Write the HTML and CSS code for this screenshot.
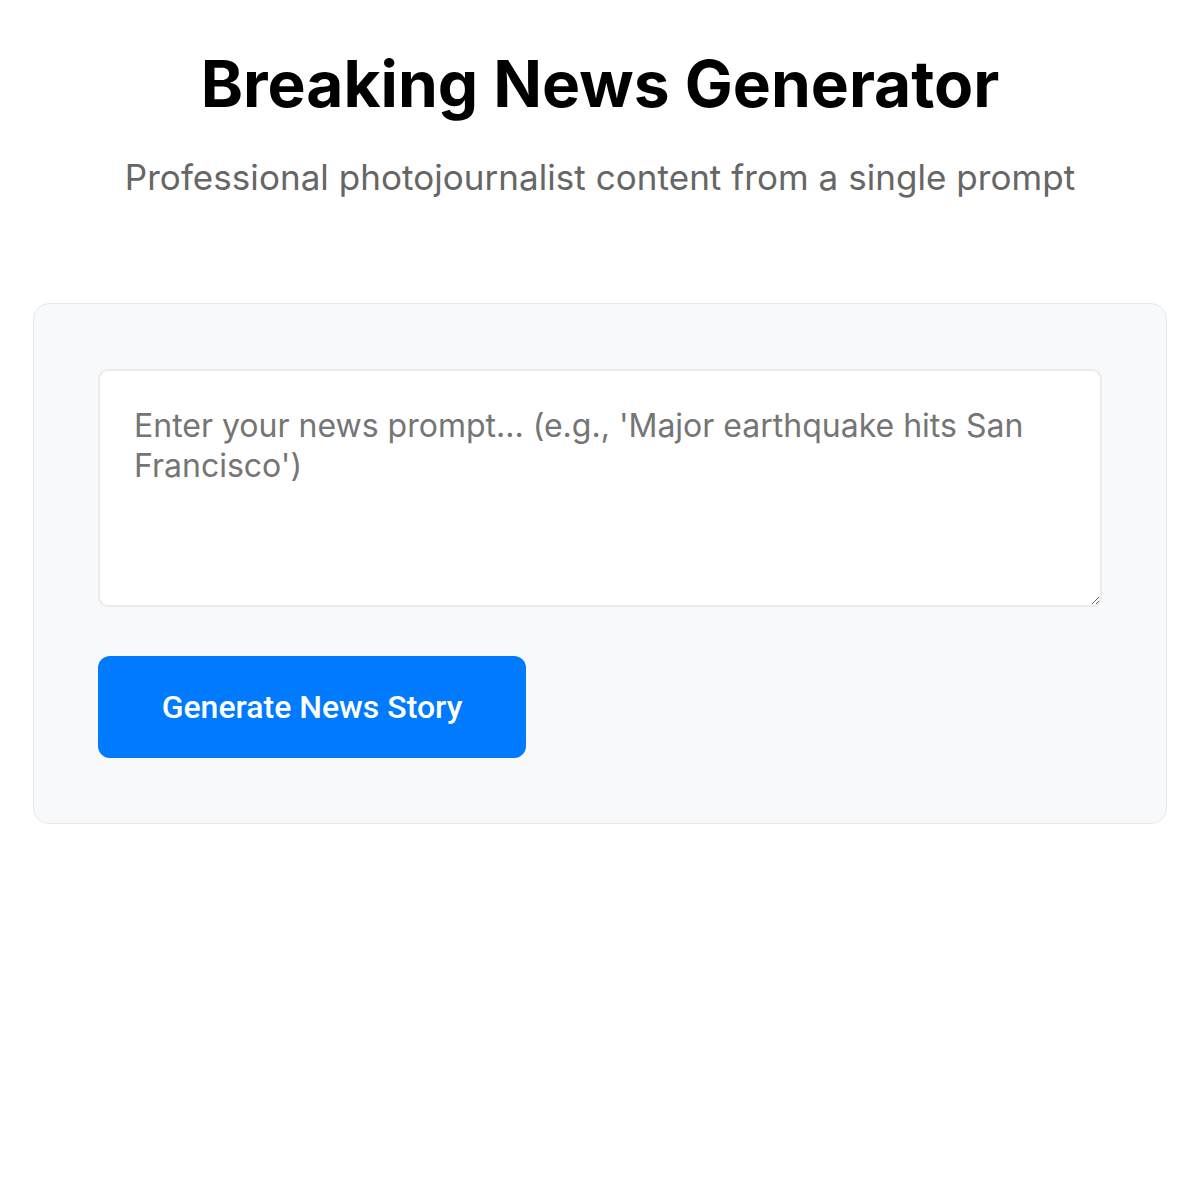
FILE: index.html
```html
<!DOCTYPE html>
<html lang="en">
<head>
    <meta charset="UTF-8">
    <meta name="viewport" content="width=device-width, initial-scale=1.0">
    <title>Breaking News Generator</title>
    <link rel="stylesheet" href="styles.css">
</head>
<body>
    <div class="container">
        <header class="header">
            <h1>Breaking News Generator</h1>
            <p class="subtitle">Professional photojournalist content from a single prompt</p>
        </header>

        <div class="prompt-card">
            <textarea
                id="prompt"
                class="prompt-input"
                placeholder="Enter your news prompt... (e.g., 'Major earthquake hits San Francisco')"
            ></textarea>
            <button class="generate-btn">Generate News Story</button>
        </div>
    </div>
</body>
</html>
```

FILE: styles.css
```css
body {
    font-family: Inter, "Noto Sans", sans-serif;
    background-color: #fff;
    color: #000;
    margin: 0;
    padding: 0;
}

.container {
    padding: 45px 33px;
}

.header {
    text-align: center;
}

.header h1 {
    margin: 0;
    font-size: 64px;
    font-weight: 700;
    line-height: 78px;
}

.subtitle {
    margin: 33px 0 0;
    font-size: 35px;
    line-height: 42px;
    letter-spacing: 0.05px;
    color: #666;
}

.prompt-card {
    margin-top: 105px;
    background: #f8f9fa;
    border: 1px solid #e6e8eb;
    border-radius: 16px;
    padding: 65px 64px;
    display: flex;
    flex-direction: column;
    align-items: flex-start;
}

.prompt-input {
    box-sizing: border-box;
    width: 100%;
    height: 238px;
    padding: 35px 34px 31px;
    border: 2px solid #e9ebed;
    border-radius: 10px;
    background: #fff;
    font-family: Inter, "Noto Sans", sans-serif;
    font-size: 32px;
    line-height: 40px;
    color: #333;
    resize: vertical;
}

.prompt-input::placeholder {
    color: #757575;
}

.generate-btn {
    margin-top: 49px;
    width: 428px;
    height: 102px;
    border: none;
    border-radius: 12px;
    background-color: #007bff;
    color: #fff;
    font-family: Roboto, sans-serif;
    font-size: 32px;
    font-weight: 500;
    cursor: pointer;
}

.generate-btn:hover {
    background-color: #0069d9;
}
```
